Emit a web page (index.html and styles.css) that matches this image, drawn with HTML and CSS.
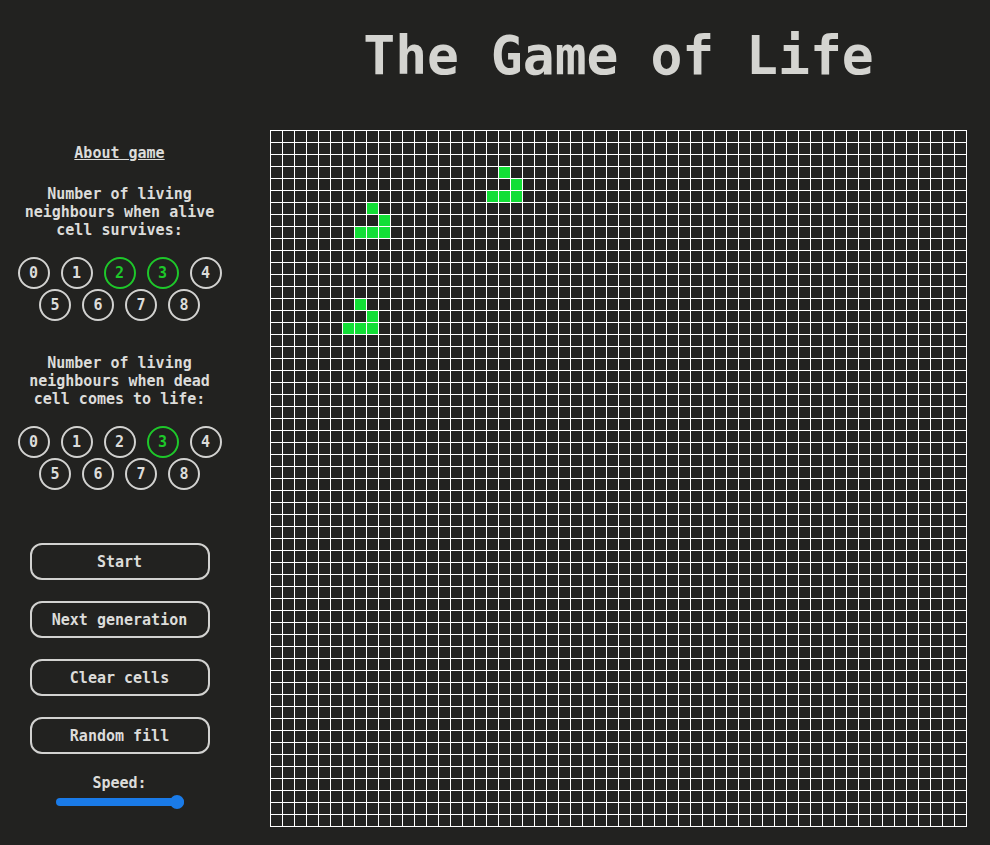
FILE: index.html
```html
<!DOCTYPE html>
<html lang="en">
<head>
<meta charset="utf-8">
<title>The Game of Life</title>
<link rel="stylesheet" href="styles.css">
</head>
<body>
<div class="app">
  <aside class="sidebar">
    <a class="about" href="#">About game</a>
    <p class="rule-label">Number of living neighbours when alive cell survives:</p>
    <div class="counts">
      <button class="count">0</button>
      <button class="count">1</button>
      <button class="count on">2</button>
      <button class="count on">3</button>
      <button class="count">4</button>
      <button class="count">5</button>
      <button class="count">6</button>
      <button class="count">7</button>
      <button class="count">8</button>
    </div>
    <p class="rule-label second">Number of living neighbours when dead cell comes to life:</p>
    <div class="counts">
      <button class="count">0</button>
      <button class="count">1</button>
      <button class="count">2</button>
      <button class="count on">3</button>
      <button class="count">4</button>
      <button class="count">5</button>
      <button class="count">6</button>
      <button class="count">7</button>
      <button class="count">8</button>
    </div>
    <div class="controls">
      <button class="action">Start</button>
      <button class="action">Next generation</button>
      <button class="action">Clear cells</button>
      <button class="action">Random fill</button>
    </div>
    <label class="speed">
      <span class="speed-text">Speed:</span>
      <input class="speed-range" type="range" min="1" max="10" value="10">
    </label>
  </aside>
  <main class="board-area">
    <h1 class="title">The Game of Life</h1>
    <div class="board" id="board"></div>
  </main>
</div>
<script src="script.js"></script>
</body>
</html>
```

FILE: styles.css
```css
html, body {
  margin: 0;
  padding: 0;
  background: #222220;
}

body {
  font-family: "DejaVu Sans Mono", "Liberation Mono", monospace;
  color: #dcdcda;
  font-size: 15px;
  font-weight: bold;
  line-height: 18px;
}

.app {
  display: flex;
  gap: 31px;
  width: 990px;
  height: 845px;
  overflow: hidden;
}

.sidebar {
  width: 239px;
  flex: none;
  padding-top: 144px;
  text-align: center;
  display: flex;
  flex-direction: column;
  align-items: center;
}

.about {
  display: block;
  color: #dcdcda;
  text-decoration: underline;
  line-height: 18px;
}

.rule-label {
  margin: 23px 0 0;
  padding: 0 14px;
  line-height: 18px;
}

.rule-label.second {
  margin-top: 33px;
}

.counts {
  margin-top: 18px;
  width: 204px;
  display: flex;
  flex-wrap: wrap;
  justify-content: center;
  column-gap: 11px;
  row-gap: 0;
}

.count {
  box-sizing: border-box;
  width: 32px;
  height: 32px;
  border-radius: 50%;
  border: 2px solid #d2d2d0;
  background: transparent;
  color: #dcdcda;
  font: inherit;
  padding: 0;
  display: flex;
  align-items: center;
  justify-content: center;
}

.count.on {
  border-color: #1ec82a;
  color: #1ec82a;
}

.controls {
  margin-top: 53px;
  display: flex;
  flex-direction: column;
  gap: 21px;
}

.action {
  box-sizing: border-box;
  width: 180px;
  height: 37px;
  border: 2px solid #d2d2d0;
  border-radius: 12px;
  background: transparent;
  color: #dcdcda;
  font: inherit;
  padding: 0;
}

.speed {
  margin-top: 20px;
  display: flex;
  flex-direction: column;
  align-items: center;
}

.speed-text {
  display: block;
  line-height: 18px;
}

.speed-range {
  -webkit-appearance: none;
  appearance: none;
  width: 128px;
  height: 16px;
  margin: 2px 0 0;
  padding: 0;
  background: transparent;
}

.speed-range::-webkit-slider-runnable-track {
  height: 8px;
  border-radius: 4px;
  background: #1a7be8;
}

.speed-range::-webkit-slider-thumb {
  -webkit-appearance: none;
  appearance: none;
  width: 14px;
  height: 14px;
  border-radius: 50%;
  background: #1a7be8;
  margin-top: -3px;
}

.board-area {
  padding-top: 24px;
  display: flex;
  flex-direction: column;
  align-items: center;
  width: 697px;
}

.title {
  margin: 0 0 42px;
  font-size: 53px;
  line-height: 64px;
  font-weight: bold;
  color: #d4d4d0;
  white-space: nowrap;
}

.board {
  display: grid;
  grid-template-columns: repeat(58, 11px);
  grid-auto-rows: 11px;
  gap: 1px;
  padding: 1px;
  background: #ffffff;
}

.cell {
  background: #222220;
}

.cell.alive {
  background: #12df36;
}
```

FILE: script.js
```js
(function () {
  var size = 58;
  var alive = [
    [3, 19], [4, 20], [5, 18], [5, 19], [5, 20],
    [6, 8], [7, 9], [8, 7], [8, 8], [8, 9],
    [14, 7], [15, 8], [16, 6], [16, 7], [16, 8]
  ];
  var set = {};
  alive.forEach(function (p) { set[p[0] + ',' + p[1]] = true; });
  var board = document.getElementById('board');
  var frag = document.createDocumentFragment();
  for (var r = 0; r < size; r++) {
    for (var c = 0; c < size; c++) {
      var d = document.createElement('div');
      d.className = set[r + ',' + c] ? 'cell alive' : 'cell';
      frag.appendChild(d);
    }
  }
  board.appendChild(frag);
})();
```
